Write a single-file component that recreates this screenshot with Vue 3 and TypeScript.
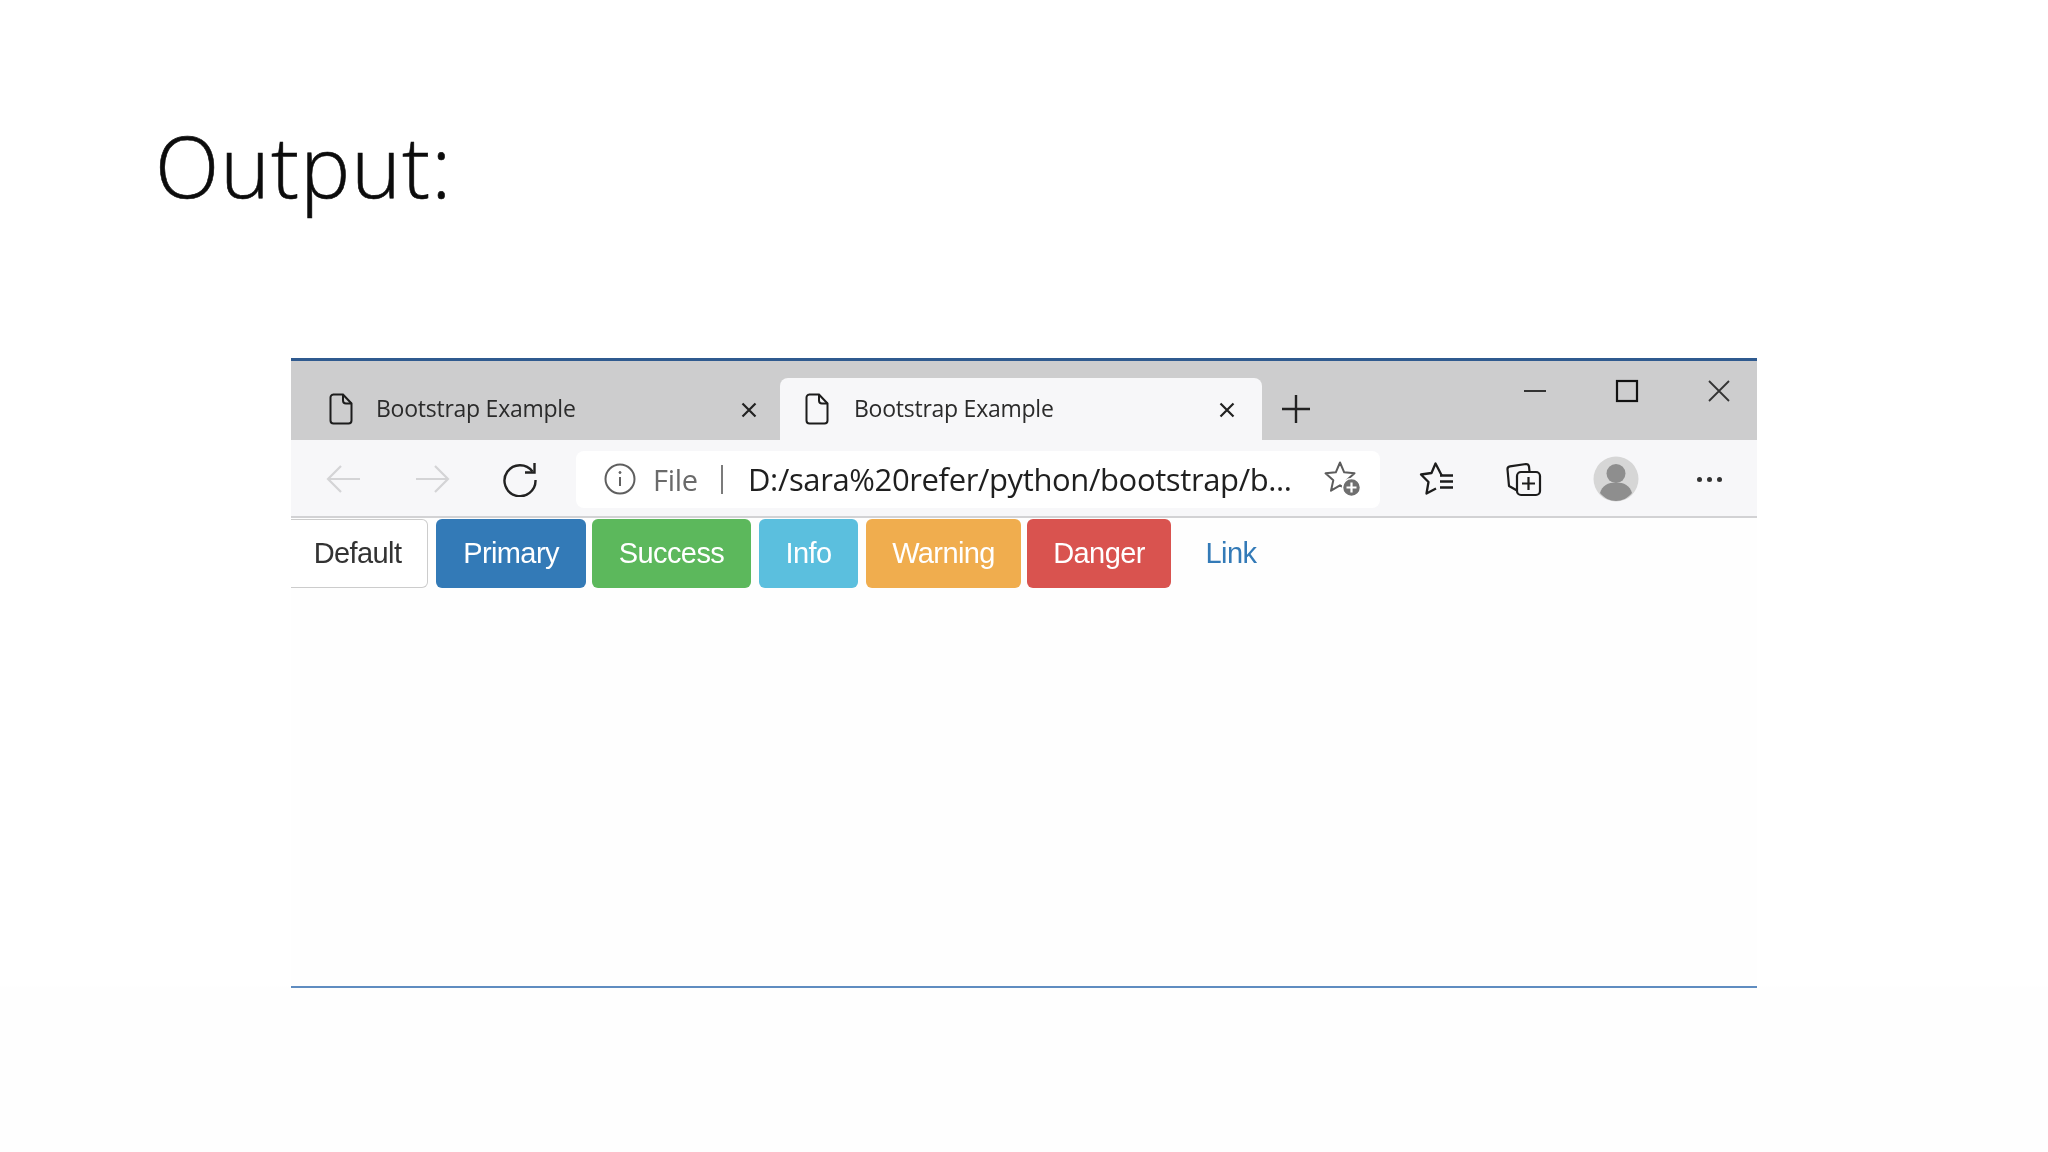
<script setup lang="ts">
const buttons = [
  { label: 'Default', cls: 'default' },
  { label: 'Primary', cls: 'primary' },
  { label: 'Success', cls: 'success' },
  { label: 'Info', cls: 'info' },
  { label: 'Warning', cls: 'warning' },
  { label: 'Danger', cls: 'danger' },
  { label: 'Link', cls: 'link' },
]
const tabs = [{ cls: 'inactive' }, { cls: 'active' }]
</script>

<template>
  <div class="slide">
    <h1 class="title">Output:</h1>
    <div class="frame">
      <div class="strip">
        <div v-for="t in tabs" :key="t.cls" class="tab" :class="t.cls">
          <svg class="doc" width="24" height="32" viewBox="0 0 24 32" fill="none" stroke="#1c1c1c" stroke-width="2">
            <path d="M4 1.5h10l8.500 9v17a3 3 0 0 1-3 3H4.500a3 3 0 0 1-3-3V4.500a3 3 0 0 1 3-3z" />
            <path d="M14 1.500v6a3 3 0 0 0 3 3h5.500" />
          </svg>
          <span class="tab-title">Bootstrap Example</span>
          <svg class="tab-x" width="18" height="18" viewBox="0 0 18 18" stroke="#222" stroke-width="2.200" fill="none">
            <path d="M2.500 2.500l13 13M15.500 2.500l-13 13" />
          </svg>
        </div>
        <svg class="plus" width="30" height="30" viewBox="0 0 30 30" stroke="#222" stroke-width="2.400" fill="none">
          <path d="M15 1v28M1 15h28" />
        </svg>
        <div class="win">
          <svg width="24" height="24" viewBox="0 0 24 24" stroke="#333" stroke-width="2" fill="none"><path d="M1 12h22" /></svg>
          <svg width="24" height="24" viewBox="0 0 24 24" stroke="#111" stroke-width="2.200" fill="none"><rect x="2" y="2" width="20" height="20" /></svg>
          <svg width="24" height="24" viewBox="0 0 24 24" stroke="#333" stroke-width="1.800" fill="none"><path d="M2 2l20 20M22 2L2 22" /></svg>
        </div>
      </div>

      <div class="toolbar">
        <span class="slot">
          <svg width="36" height="30" viewBox="0 0 36 30" stroke="#d4d4d6" stroke-width="2.200" fill="none"><path d="M34 15H3M15 2L2 15l13 13" /></svg>
        </span>
        <span class="slot">
          <svg width="36" height="30" viewBox="0 0 36 30" stroke="#d4d4d6" stroke-width="2.200" fill="none"><path d="M2 15h31M21 2l13 13-13 13" /></svg>
        </span>
        <span class="slot">
          <svg width="36" height="36" viewBox="0 0 36 36" stroke="#222" stroke-width="2.400" fill="none"><path d="M30.500 10.500A15.500 15.500 0 1 0 33.500 19" /><path d="M32.500 2v9.500H23" /></svg>
        </span>
        <div class="address">
          <svg class="info-i" width="32" height="32" viewBox="0 0 32 32" fill="none" stroke="#5f5f5f" stroke-width="2"><circle cx="16" cy="16" r="14.500" /><path d="M16 14v9" /><circle cx="16" cy="9.500" r="1" fill="#5f5f5f" stroke-width="1" /></svg>
          <span class="file">File</span>
          <span class="sep"></span>
          <span class="url">D:/sara%20refer/python/bootstrap/b...</span>
          <svg class="star-add" width="38" height="38" viewBox="0 0 38 38" fill="none">
            <path d="M16 2.500l4.200 9.800 10.300 1-7.800 7 2.300 10.400-9-5.400-9 5.400 2.300-10.400-7.800-7 10.300-1z" stroke="#5c5c5c" stroke-width="2" stroke-linejoin="round" />
            <circle cx="27.500" cy="27.500" r="9" fill="#6f6f6f" stroke="#fff" stroke-width="1.500" />
            <path d="M27.500 22.500v10M22.500 27.500h10" stroke="#fff" stroke-width="2.200" />
          </svg>
        </div>
        <span class="slot s1">
          <svg width="36" height="36" viewBox="0 0 36 36" fill="none" stroke="#1c1c1c" stroke-width="2.300" stroke-linejoin="round">
            <path d="M23 15L16.500 2.500 12.500 12 2 13.500l7.500 7.500-2 11.500L17 27.500" />
            <path d="M21 14.500h13M21 20.500h13M21 26.500h13" />
          </svg>
        </span>
        <span class="slot s2">
          <svg width="36" height="36" viewBox="0 0 36 36" fill="none" stroke="#1c1c1c" stroke-width="2.200" stroke-linejoin="round">
            <path d="M11 29.500L3 25 1.500 8.500a3 3 0 0 1 2.500-3.200L20 3a3 3 0 0 1 3 2.500l.5 5" />
            <rect x="11" y="11" width="23" height="23" rx="4" />
            <path d="M22.500 16v13M16 22.500h13" />
          </svg>
        </span>
        <span class="slot s3">
          <svg width="46" height="46" viewBox="0 0 46 46">
            <circle cx="23" cy="23" r="22.500" fill="#d6d6d6" />
            <circle cx="23" cy="17.500" r="9.500" fill="#8e8e8e" />
            <path d="M7 37c2-7.500 8-10.500 16-10.500S37 29.500 39 37c-4 5-10 8-16 8S11 42 7 37z" fill="#8e8e8e" />
          </svg>
        </span>
        <span class="slot s4">
          <span class="dot"></span><span class="dot"></span><span class="dot"></span>
        </span>
      </div>

      <div class="btn-row">
        <button v-for="b in buttons" :key="b.label" class="btn" :class="b.cls">{{ b.label }}</button>
      </div>
    </div>
  </div>
</template>

<style>
html, body { margin: 0; background: #fff; }
</style>

<style scoped>
.slide {
  width: 2048px;
  height: 1152px;
  box-sizing: border-box;
  padding-top: 108px;
  background: linear-gradient(#ffffff 0, #ffffff 986px, #fefefe 987px);
  overflow: hidden;
  filter: blur(0.4px);
}
.title {
  margin: 0 0 0 155px;
  padding-top: 2px;
  box-sizing: border-box;
  font-family: "Open Sans", Lato, sans-serif;
  font-weight: 300;
  font-size: 84px;
  letter-spacing: 1.100px;
  -webkit-text-stroke: 0.600px #0c0c0c;
  line-height: 112px;
  height: 250px;
  color: #0c0c0c;
}
.frame {
  margin-left: 291px;
  width: 1466px;
  height: 630px;
  box-sizing: border-box;
  border-top: 3px solid #2f5a8f;
  border-bottom: 2px solid #5f8cc0;
  background: #fefefe;
}
.strip {
  height: 79px;
  background: #cdcdce;
  display: flex;
  align-items: flex-end;
}
.tab {
  height: 62px;
  display: flex;
  align-items: center;
  box-sizing: border-box;
}
.tab.inactive { width: 489px; padding-left: 38px; }
.tab.active {
  width: 482px;
  padding-left: 25px;
  background: #f7f7f9;
  border-radius: 8px 8px 0 0;
}
.tab-x { flex: none; margin-left: 165px; margin-top: 2px; }
.doc { flex: none; margin-right: 25px; }
.tab.inactive .doc { margin-right: 23px; }
.tab-title {
  font-family: "Open Sans", sans-serif;
  font-size: 23px;
  color: #2b2b2b;
  width: 199px;
  white-space: nowrap;
  letter-spacing: -0.250px;
  padding-bottom: 3px;
}
.plus { margin: 0 0 16px 19px; flex: none; }
.win {
  margin-left: auto;
  align-self: flex-start;
  display: flex;
  margin-top: 18px;
  margin-right: 26px;
  gap: 68px;
}
.toolbar {
  height: 78px;
  box-sizing: border-box;
  background: #f7f7f9;
  border-bottom: 2px solid #d2d2d4;
  padding-top: 2px;
  display: flex;
  align-items: center;
  padding-left: 9px;
}
.slot {
  flex: none;
  width: 88px;
  display: flex;
  justify-content: center;
  align-items: center;
}
.address {
  flex: none;
  width: 804px;
  height: 57px;
  margin: 0 13px 0 12px;
  box-sizing: border-box;
  background: #fff;
  border-radius: 8px;
  display: flex;
  align-items: center;
  padding-left: 28px;
}
.info-i { flex: none; margin-right: 17px; }
.file {
  font-family: "Open Sans", sans-serif;
  font-size: 29px;
  color: #6a6a6a;
  width: 46px;
  letter-spacing: -0.300px;
}
.sep {
  width: 2px;
  height: 29px;
  background: #7b7b7b;
  margin: 0 25px 0 22px;
}
.url {
  font-family: "Open Sans", sans-serif;
  font-size: 31px;
  color: #1f1f1f;
  white-space: nowrap;
  width: 542px;
  letter-spacing: -0.370px;
}
.star-add { flex: none; margin-left: 34px; }
.s2 { width: 86px; }
.s3 { width: 97px; }
.s4 { width: 90px; gap: 5px; }
.dot { width: 5px; height: 5px; background: #333; border-radius: 50%; }
.btn-row {
  display: flex;
  align-items: stretch;
  height: 69px;
  margin-top: 1px;
}
.btn {
  box-sizing: border-box;
  border: 1px solid transparent;
  border-radius: 6px;
  padding: 0;
  margin: 0 8px 0 0;
  font-family: "Liberation Sans", Arial, sans-serif;
  font-size: 29px;
  letter-spacing: -0.600px;
  color: #fff;
  text-align: center;
}
.default { width: 137px; background: #fff; color: #333; border-color: #ccc; border-left: none; border-radius: 0 6px 6px 0; padding-right: 3px; }
.primary { width: 150px; background: #337ab7; margin-right: 6px; }
.success { width: 159px; background: #5cb85c; }
.info { width: 99px; background: #5bbfde; }
.warning { width: 155px; background: #f0ad4e; margin-right: 6px; }
.danger { width: 144px; background: #d9534f; }
.link { width: 104px; background: transparent; color: #337ab7; margin: 0; }
</style>
